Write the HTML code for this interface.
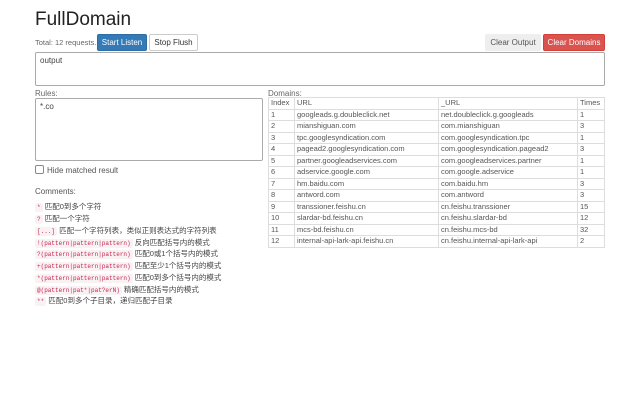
<!DOCTYPE html>
<html><head><meta charset="utf-8"><style>
*{box-sizing:border-box;margin:0;padding:0}
body{width:640px;height:400px;background:#fff;font-family:"Liberation Sans","Noto Sans CJK SC",sans-serif;color:#333;position:relative;overflow:hidden;font-size:8px}
.a{position:absolute}
h1{position:absolute;left:35px;top:9px;font-size:19px;font-weight:normal;color:#222}
.btn{position:absolute;height:17px;font-size:8px;line-height:15px;text-align:center;border:1px solid #ccc;border-radius:2px;background:#fff;color:#333}
.box{position:absolute;border:1px solid #aaa;border-radius:2px;padding:3px 4px;font-size:8px;color:#444}
table{position:absolute;left:268px;top:97px;width:337px;border-collapse:collapse;font-size:7.5px;color:#555}
td{border:1px solid #ddd;height:11.5px;padding:0 2px;line-height:10px;white-space:nowrap}
code{font-family:"Liberation Mono",monospace;font-size:6px;color:#c7254e;background:#f9f2f4;padding:1px 2px;border-radius:2px}
.c{position:absolute;left:35px;font-size:7.5px;color:#444;white-space:nowrap}
</style></head><body>
<h1>FullDomain</h1>
<div class="a" style="left:35px;top:38px;color:#666;font-size:7.5px">Total: 12 requests.</div>
<div class="btn" style="left:97px;top:34px;width:50px;background:#337ab7;border-color:#2e6da4;color:#fff">Start Listen</div>
<div class="btn" style="left:149px;top:34px;width:49px">Stop Flush</div>
<div class="btn" style="left:485px;top:34px;width:56px;background:#eee;border-color:#eee;color:#555">Clear Output</div>
<div class="btn" style="left:543px;top:34px;width:62px;background:#d9534f;border-color:#d43f3a;color:#fff">Clear Domains</div>
<div class="box" style="left:35px;top:52px;width:570px;height:34px">output</div>
<div class="a" style="left:35px;top:89px;color:#666">Rules:</div>
<div class="box" style="left:35px;top:98px;width:228px;height:63px">*.co</div>
<div class="a" style="left:35px;top:165px;width:9px;height:9px;border:1px solid #888;border-radius:2px"></div>
<div class="a" style="left:47px;top:166px;color:#555">Hide matched result</div>
<div class="a" style="left:268px;top:89px;color:#666">Domains:</div>
<table>
<tr><td style="width:26px">Index</td><td style="width:144px">URL</td><td style="width:139px">_URL</td><td>Times</td></tr>
<tr><td>1</td><td>googleads.g.doubleclick.net</td><td>net.doubleclick.g.googleads</td><td>1</td></tr>
<tr><td>2</td><td>mianshiguan.com</td><td>com.mianshiguan</td><td>3</td></tr>
<tr><td>3</td><td>tpc.googlesyndication.com</td><td>com.googlesyndication.tpc</td><td>1</td></tr>
<tr><td>4</td><td>pagead2.googlesyndication.com</td><td>com.googlesyndication.pagead2</td><td>3</td></tr>
<tr><td>5</td><td>partner.googleadservices.com</td><td>com.googleadservices.partner</td><td>1</td></tr>
<tr><td>6</td><td>adservice.google.com</td><td>com.google.adservice</td><td>1</td></tr>
<tr><td>7</td><td>hm.baidu.com</td><td>com.baidu.hm</td><td>3</td></tr>
<tr><td>8</td><td>antword.com</td><td>com.antword</td><td>3</td></tr>
<tr><td>9</td><td>transsioner.feishu.cn</td><td>cn.feishu.transsioner</td><td>15</td></tr>
<tr><td>10</td><td>slardar-bd.feishu.cn</td><td>cn.feishu.slardar-bd</td><td>12</td></tr>
<tr><td>11</td><td>mcs-bd.feishu.cn</td><td>cn.feishu.mcs-bd</td><td>32</td></tr>
<tr><td>12</td><td>internal-api-lark-api.feishu.cn</td><td>cn.feishu.internal-api-lark-api</td><td>2</td></tr>
</table>
<div class="a" style="left:35px;top:187px;color:#555">Comments:</div>
<div class="c" style="top:201px"><code>*</code> 匹配0到多个字符</div>
<div class="c" style="top:213px"><code>?</code> 匹配一个字符</div>
<div class="c" style="top:225px"><code>[...]</code> 匹配一个字符列表，类似正则表达式的字符列表</div>
<div class="c" style="top:237px"><code>!(pattern|pattern|pattern)</code> 反向匹配括号内的模式</div>
<div class="c" style="top:248px"><code>?(pattern|pattern|pattern)</code> 匹配0或1个括号内的模式</div>
<div class="c" style="top:260px"><code>+(pattern|pattern|pattern)</code> 匹配至少1个括号内的模式</div>
<div class="c" style="top:272px"><code>*(pattern|pattern|pattern)</code> 匹配0到多个括号内的模式</div>
<div class="c" style="top:284px"><code>@(pattern|pat*|pat?erN)</code> 精确匹配括号内的模式</div>
<div class="c" style="top:295px"><code>**</code> 匹配0到多个子目录，递归匹配子目录</div>
</body></html>
